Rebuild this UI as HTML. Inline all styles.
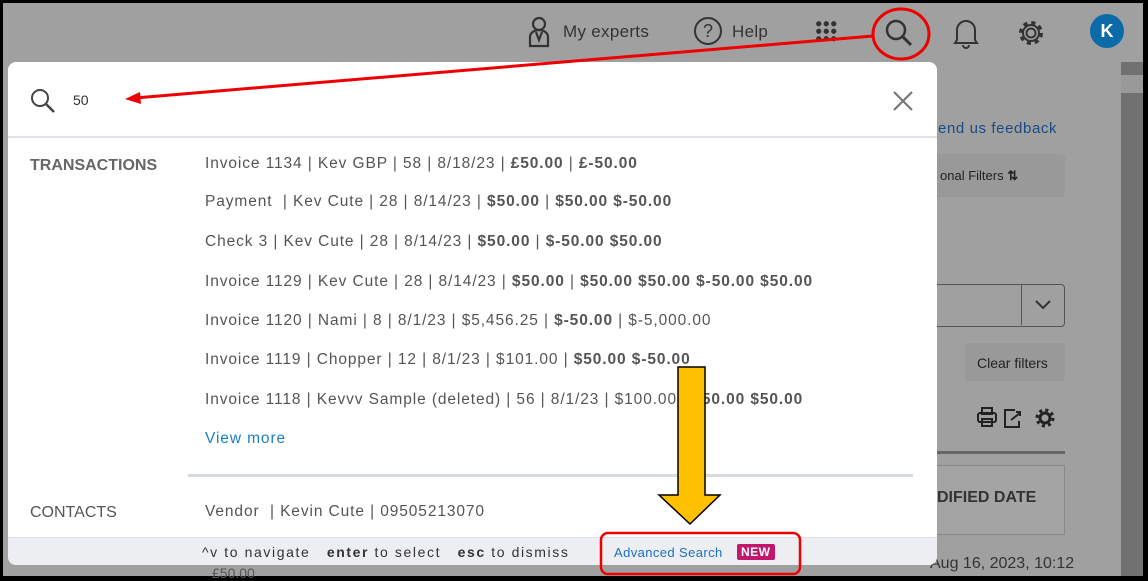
<!DOCTYPE html>
<html><head><style>
*{margin:0;padding:0;box-sizing:border-box}
body{width:1148px;height:579px;overflow:hidden;background:#000;font-family:"Liberation Sans",sans-serif;position:relative}
.bg{position:absolute;left:3px;top:3px;width:1140px;height:573px;background:#a0a0a0}
.sb{position:absolute;left:1121px;top:62px;width:22px;height:514px;background:#717171}
.a{position:absolute;white-space:nowrap}
.pop{position:absolute;left:8px;top:62px;width:929px;height:503px;background:#fff;border-radius:8px;overflow:hidden}
.row{position:absolute;left:197px;font-size:15.5px;color:#555;letter-spacing:0.9px}
.row b{color:#555}
</style></head><body>
<div class="bg"></div>
<div class="sb"></div>
<div class="a" style="left:1121px;top:75px;width:22px;height:18px;background:#999"></div>
<!-- top bar -->
<svg class="a" style="left:527px;top:16px" width="24" height="32"><circle cx="12" cy="8" r="6" fill="none" stroke="#333" stroke-width="2.2"/><path d="M3 30 V21 a9 7 0 0 1 18 0 V30 Z M9 16 L12 24 L15 16" fill="none" stroke="#333" stroke-width="2.2"/></svg>
<div class="a" style="left:563px;top:22px;font-size:17px;color:#333;letter-spacing:0.3px">My experts</div>
<div class="a" style="left:694px;top:17px;width:28px;height:28px;border:2px solid #333;border-radius:50%;text-align:center;font-size:18px;line-height:24px;color:#333">?</div>
<div class="a" style="left:732px;top:22px;font-size:17px;color:#333;letter-spacing:0.3px">Help</div>
<div class="a" style="left:815px;top:20px;width:22px;height:22px;background:radial-gradient(circle,#333 2.4px,transparent 2.8px) 0 0/7.5px 7.5px"></div>
<svg class="a" style="left:870px;top:5px" width="64" height="58"><circle cx="26" cy="25" r="9" fill="none" stroke="#333" stroke-width="2.5"/><line x1="33" y1="32" x2="41" y2="40" stroke="#333" stroke-width="3"/></svg>
<svg class="a" style="left:952px;top:16px" width="28" height="34"><path d="M5 24 V14 a9 9 0 0 1 18 0 V24 l2 3 H3z" fill="none" stroke="#333" stroke-width="2"/><path d="M11 29 a3 3 0 0 0 6 0" fill="none" stroke="#333" stroke-width="2"/></svg>
<svg class="a" style="left:1016px;top:18px" width="30" height="30"><circle cx="15" cy="15" r="4.5" fill="none" stroke="#333" stroke-width="2"/><circle cx="15" cy="15" r="10" fill="none" stroke="#333" stroke-width="4" stroke-dasharray="4 3.85"/><circle cx="15" cy="15" r="8" fill="none" stroke="#333" stroke-width="2"/></svg>
<div class="a" style="left:1090px;top:14px;width:34px;height:34px;border-radius:50%;background:#0b6aa8;color:#fff;text-align:center;line-height:34px;font-size:18px;font-weight:bold">K</div>
<!-- right background content -->
<div class="a" style="left:938px;top:120px;font-size:15px;color:#1a4a86;letter-spacing:0.6px">end us feedback</div>
<div class="a" style="left:930px;top:154px;width:135px;height:43px;background:#999;border-radius:4px"></div>
<div class="a" style="left:940px;top:168px;font-size:13px;color:#222">onal Filters <b>&#8645;</b></div>
<div class="a" style="left:930px;top:284px;width:135px;height:43px;border:1.5px solid #555;border-radius:4px"></div>
<div class="a" style="left:1021px;top:285px;width:1px;height:40px;background:#555"></div>
<svg class="a" style="left:1034px;top:298px" width="18" height="14"><path d="M2 3 L9 10 L16 3" fill="none" stroke="#333" stroke-width="2"/></svg>
<div class="a" style="left:965px;top:343px;width:100px;height:38px;background:#999;border-radius:4px"></div>
<div class="a" style="left:977px;top:355px;font-size:14px;color:#222">Clear filters</div>
<svg class="a" style="left:975px;top:405px" width="85" height="26"><rect x="3" y="8" width="18" height="9" rx="2" fill="none" stroke="#222" stroke-width="2"/><rect x="7" y="3" width="10" height="6" fill="none" stroke="#222" stroke-width="2"/><rect x="7" y="14" width="10" height="7" fill="none" stroke="#222" stroke-width="2"/><path d="M40 5 H30 V22 H44 V16 M36 15 L45 8 M41 7 H45 V11" fill="none" stroke="#222" stroke-width="2"/><circle cx="70" cy="13" r="5" fill="none" stroke="#222" stroke-width="3"/><circle cx="70" cy="13" r="8" fill="none" stroke="#222" stroke-width="3" stroke-dasharray="3 3.3"/></svg>
<div class="a" style="left:930px;top:451px;width:135px;height:3px;background:#666"></div>
<div class="a" style="left:930px;top:465px;width:135px;height:70px;border:1px solid #888;background:#a4a4a4"></div>
<div class="a" style="left:937px;top:489px;font-size:16px;font-weight:bold;color:#333">DIFIED DATE</div>
<div class="a" style="left:930px;top:555px;font-size:16px;color:#333">Aug 16, 2023, 10:12</div>
<div class="a" style="left:212px;top:565px;font-size:14px;color:#555">£50.00</div>
<!-- popup -->
<div class="pop">
<svg class="a" style="left:20px;top:24px" width="32" height="32"><circle cx="12" cy="12" r="8" fill="none" stroke="#444" stroke-width="2"/><line x1="18" y1="18" x2="26" y2="26" stroke="#444" stroke-width="2.5"/></svg>
<div class="a" style="left:65px;top:30px;font-size:14px;color:#333">50</div>
<svg class="a" style="left:884px;top:28px" width="22" height="22"><path d="M2 2 L20 20 M20 2 L2 20" stroke="#777" stroke-width="2.2"/></svg>
<div class="a" style="left:0;top:74px;width:929px;height:2px;background:#e1e4e8"></div>
<div class="a" style="left:22px;top:95px;font-size:16px;font-weight:bold;color:#666">TRANSACTIONS</div>
<div class="row a" style="top:93px">Invoice 1134 | Kev GBP | 58 | 8/18/23 | <b>£50.00</b> | <b>£-50.00</b></div>
<div class="row a" style="top:131px">Payment &nbsp;| Kev Cute | 28 | 8/14/23 | <b>$50.00</b> | <b>$50.00 $-50.00</b></div>
<div class="row a" style="top:171px">Check 3 | Kev Cute | 28 | 8/14/23 | <b>$50.00</b> | <b>$-50.00 $50.00</b></div>
<div class="row a" style="top:211px">Invoice 1129 | Kev Cute | 28 | 8/14/23 | <b>$50.00</b> | <b>$50.00 $50.00 $-50.00 $50.00</b></div>
<div class="row a" style="top:250px">Invoice 1120 | Nami | 8 | 8/1/23 | $5,456.25 | <b>$-50.00</b> | $-5,000.00</div>
<div class="row a" style="top:289px">Invoice 1119 | Chopper | 12 | 8/1/23 | $101.00 | <b>$50.00 $-50.00</b></div>
<div class="row a" style="top:329px">Invoice 1118 | Kevvv Sample (deleted) | 56 | 8/1/23 | $100.00 | <b>$50.00 $50.00</b></div>
<div class="a" style="left:197px;top:368px;font-size:15.5px;color:#1c7fc4;letter-spacing:0.9px">View more</div>
<div class="a" style="left:180px;top:412px;width:725px;height:3px;background:#d8dbe0"></div>
<div class="a" style="left:22px;top:442px;font-size:16px;color:#555">CONTACTS</div>
<div class="row a" style="top:441px">Vendor &nbsp;| Kevin Cute | 09505213070</div>
<div class="a" style="left:0;top:475px;width:929px;height:28px;background:#eceef1;border-top:1px solid #dde"></div>
<div class="a" style="left:194px;top:482px;font-size:14px;color:#333;letter-spacing:1.6px">^v to navigate &nbsp;&nbsp;<b>enter</b> to select &nbsp;&nbsp;<b>esc</b> to dismiss</div>
<div class="a" style="left:606px;top:483px;font-size:13px;color:#1c6fc4;letter-spacing:0.4px">Advanced Search</div>
<div class="a" style="left:729px;top:482px;font-size:12px;font-weight:bold;color:#fff;background:#c1186d;padding:1px 4px;border-radius:2px;letter-spacing:0.5px">NEW</div>
</div>
<!-- annotations -->
<svg class="a" style="left:0;top:0" width="1148" height="579">
<ellipse cx="901" cy="34" rx="28" ry="25" fill="none" stroke="#e00" stroke-width="3"/>
<line x1="873" y1="36" x2="135" y2="98" stroke="#e00" stroke-width="3"/>
<polygon points="125,99 140,92 141,104" fill="#e00"/>
<polygon points="678,367 705,367 705,495 720,495 690,524 659,495 678,495" fill="#ffc000" stroke="#000" stroke-width="1.5"/>
<rect x="601" y="533" width="199" height="41" rx="7" fill="none" stroke="#e00" stroke-width="2.5"/>
</svg>
</body></html>
